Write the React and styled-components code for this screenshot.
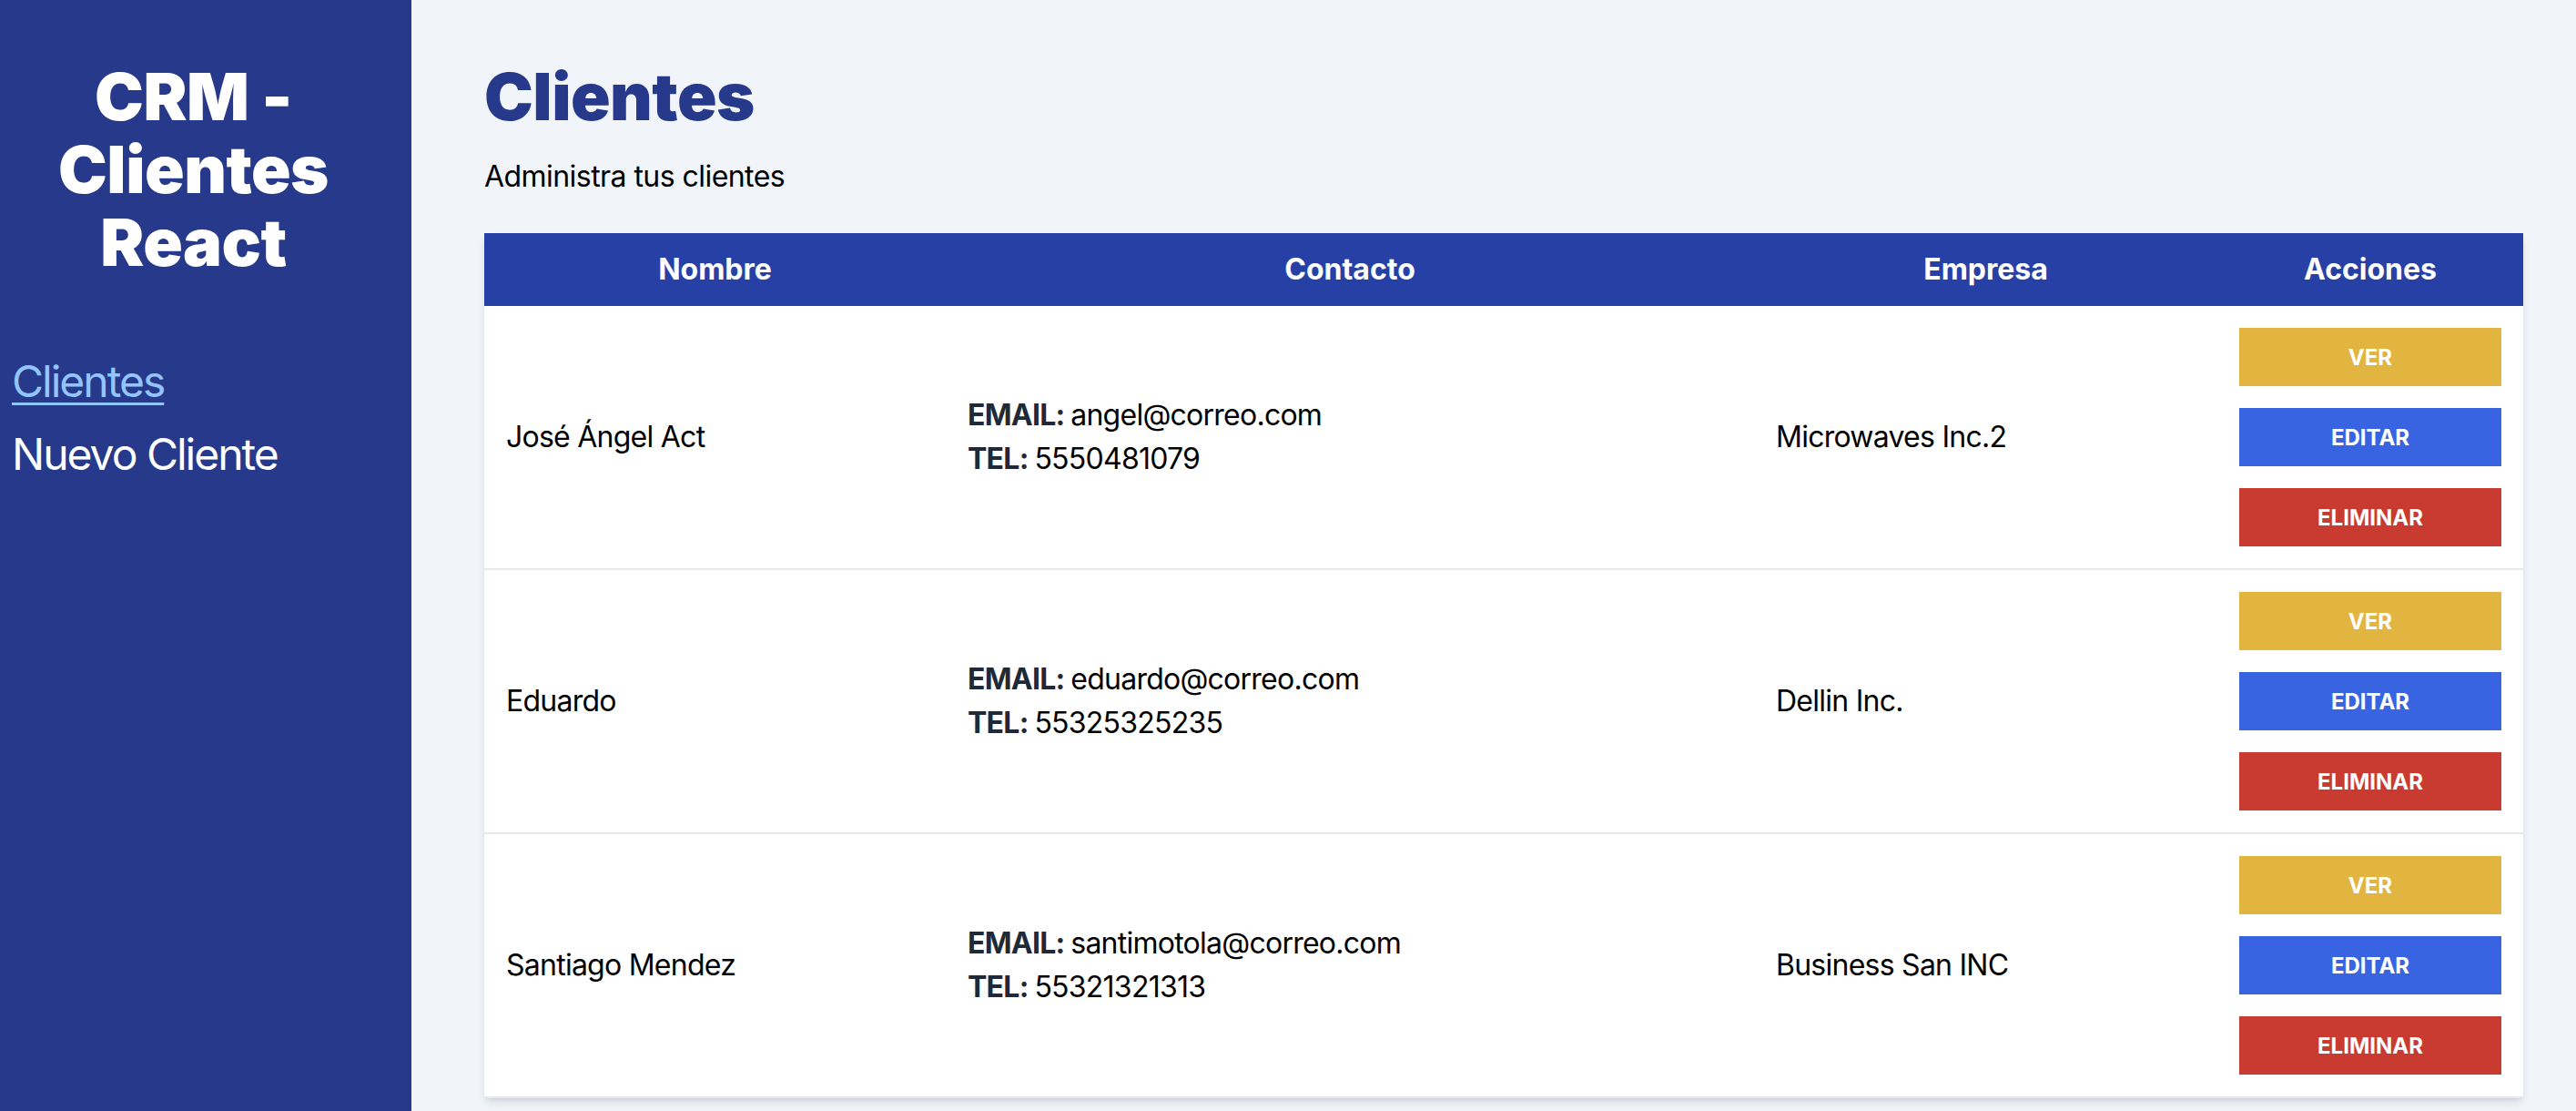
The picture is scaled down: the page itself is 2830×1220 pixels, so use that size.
import React from 'react';
import styled, { createGlobalStyle } from 'styled-components';

const GlobalStyle = createGlobalStyle`
  * {
    box-sizing: border-box;
  }
  body {
    margin: 0;
    font-family: Inter, "Noto Sans", "Liberation Sans", sans-serif;
    color: #000;
    background: #f1f4f9;
  }
`;

const Layout = styled.div`
  display: flex;
  min-height: 100vh;
`;

const Sidebar = styled.aside`
  width: 452px;
  flex-shrink: 0;
  background: #26398a;
  padding: 66px 13px;
`;

const Brand = styled.h2`
  margin: 0 27px 0 0;
  color: #fff;
  font-size: 72px;
  line-height: 80px;
  font-weight: 900;
  text-align: center;
  letter-spacing: -0.5px;
`;

const Nav = styled.nav`
  margin-top: 81px;
  display: flex;
  flex-direction: column;
  gap: 16px;
`;

const NavLink = styled.a`
  display: block;
  font-size: 48px;
  line-height: 64px;
  letter-spacing: -2px;
  color: ${(props) => (props.$active ? '#93c5fd' : '#fff')};
  text-decoration: ${(props) => (props.$active ? 'underline' : 'none')};
  text-decoration-thickness: 3px;
  text-underline-offset: 6px;
`;

const Main = styled.main`
  flex: 1;
  padding: 66px 58px 0 80px;
`;

const Title = styled.h1`
  margin: 0;
  color: #26398a;
  font-size: 72px;
  line-height: 80px;
  font-weight: 900;
  letter-spacing: -0.5px;
`;

const Subtitle = styled.p`
  margin: 24px 0 0;
  font-size: 32px;
  line-height: 48px;
  letter-spacing: -0.55px;
`;

const Table = styled.table`
  margin-top: 38px;
  width: 100%;
  table-layout: fixed;
  border-collapse: collapse;
  background: #fff;
  box-shadow: 0 6px 10px -2px rgba(0, 0, 0, 0.12), 0 2px 4px -1px rgba(0, 0, 0, 0.06);
`;

const HeadRow = styled.tr`
  background: #2740a6;
`;

const Th = styled.th`
  height: 80px;
  padding: 16px 0;
  color: #fff;
  font-size: 32px;
  line-height: 48px;
  font-weight: 700;
  text-align: center;
`;

const Row = styled.tr`
  border-bottom: 2px solid #e5e7eb;
`;

const Td = styled.td`
  padding: 24px;
  font-size: 32px;
  line-height: 48px;
  letter-spacing: -0.75px;
  vertical-align: middle;
`;

const ContactLine = styled.p`
  margin: 0;
`;

const Label = styled.span`
  color: #1f2937;
  font-weight: 700;
`;

const Button = styled.button`
  display: block;
  width: 100%;
  height: 64px;
  border: none;
  background: ${(props) => props.color};
  color: #fff;
  font-family: inherit;
  font-size: 24px;
  font-weight: 700;
  text-transform: uppercase;
  cursor: pointer;

  & + & {
    margin-top: 24px;
  }
`;

const clientes = [
  { id: 1, nombre: 'José Ángel Act', email: 'angel@correo.com', telefono: '5550481079', empresa: 'Microwaves Inc.2' },
  { id: 2, nombre: 'Eduardo', email: 'eduardo@correo.com', telefono: '55325325235', empresa: 'Dellin Inc.' },
  { id: 3, nombre: 'Santiago Mendez', email: 'santimotola@correo.com', telefono: '55321321313', empresa: 'Business San INC' },
];

const App = () => {
  return (
    <>
      <GlobalStyle />
      <Layout>
        <Sidebar>
          <Brand>CRM - Clientes React</Brand>
          <Nav>
            <NavLink href="#" $active>
              Clientes
            </NavLink>
            <NavLink href="#">Nuevo Cliente</NavLink>
          </Nav>
        </Sidebar>

        <Main>
          <Title>Clientes</Title>
          <Subtitle>Administra tus clientes</Subtitle>

          <Table>
            <colgroup>
              <col style={{ width: 507 }} />
              <col style={{ width: 888 }} />
              <col style={{ width: 509 }} />
              <col style={{ width: 336 }} />
            </colgroup>
            <thead>
              <HeadRow>
                <Th>Nombre</Th>
                <Th>Contacto</Th>
                <Th>Empresa</Th>
                <Th>Acciones</Th>
              </HeadRow>
            </thead>
            <tbody>
              {clientes.map((cliente) => (
                <Row key={cliente.id}>
                  <Td>{cliente.nombre}</Td>
                  <Td>
                    <ContactLine>
                      <Label>EMAIL: </Label>
                      {cliente.email}
                    </ContactLine>
                    <ContactLine>
                      <Label>TEL: </Label>
                      {cliente.telefono}
                    </ContactLine>
                  </Td>
                  <Td>{cliente.empresa}</Td>
                  <Td>
                    <Button color="#e2b540">Ver</Button>
                    <Button color="#3864e1">Editar</Button>
                    <Button color="#c93a31">Eliminar</Button>
                  </Td>
                </Row>
              ))}
            </tbody>
          </Table>
        </Main>
      </Layout>
    </>
  );
};

export default App;
